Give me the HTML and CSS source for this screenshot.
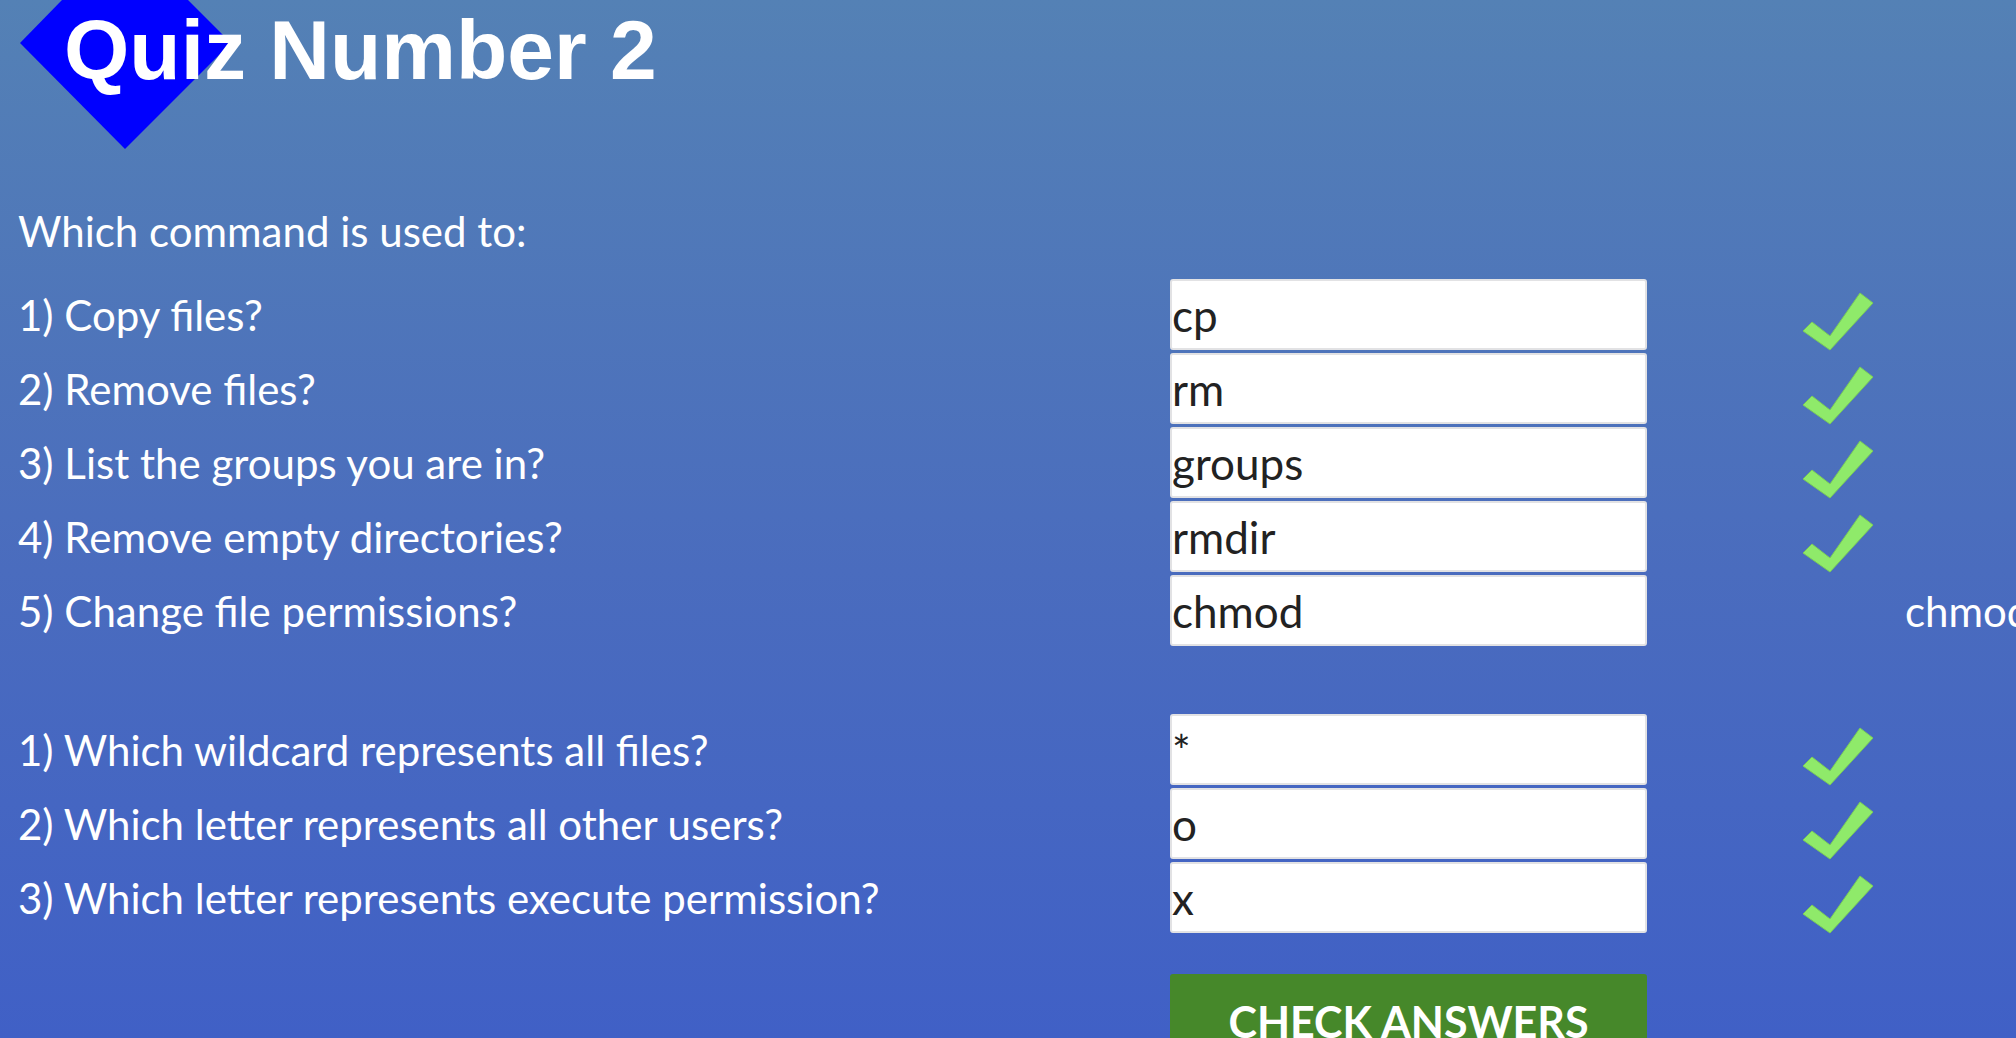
FILE: index.html
```html
<!DOCTYPE html>
<html lang="en">
<head>
<meta charset="utf-8">
<title>Quiz Number 2</title>
<link rel="stylesheet" href="styles.css">
</head>
<body>
<header class="brand">
  <svg class="gem" width="240" height="150" viewBox="0 0 240 150" aria-hidden="true"><polygon points="20,43 62,0 188,0 231,43 125,149" fill="#0000ff"/></svg>
  <h1 class="title">Quiz Number 2</h1>
</header>
<main class="quiz">
  <p class="intro">Which command is used to:</p>
  <div class="grid">
    <label class="q">1) Copy files?</label>
    <input class="answer" type="text" value="cp">
    <div class="mark"><svg class="tick" viewBox="0 0 80 62" width="80" height="62"><polygon points="3,42 12,33 30,47 60,4 73,14 30,61"/></svg></div>
    <div class="fix"></div>

    <label class="q">2) Remove files?</label>
    <input class="answer" type="text" value="rm">
    <div class="mark"><svg class="tick" viewBox="0 0 80 62" width="80" height="62"><polygon points="3,42 12,33 30,47 60,4 73,14 30,61"/></svg></div>
    <div class="fix"></div>

    <label class="q">3) List the groups you are in?</label>
    <input class="answer" type="text" value="groups">
    <div class="mark"><svg class="tick" viewBox="0 0 80 62" width="80" height="62"><polygon points="3,42 12,33 30,47 60,4 73,14 30,61"/></svg></div>
    <div class="fix"></div>

    <label class="q">4) Remove empty directories?</label>
    <input class="answer" type="text" value="rmdir">
    <div class="mark"><svg class="tick" viewBox="0 0 80 62" width="80" height="62"><polygon points="3,42 12,33 30,47 60,4 73,14 30,61"/></svg></div>
    <div class="fix"></div>

    <label class="q">5) Change file permissions?</label>
    <input class="answer" type="text" value="chmod">
    <div class="mark"></div>
    <div class="fix">chmod</div>

    <div class="spacer"></div>

    <label class="q">1) Which wildcard represents all files?</label>
    <input class="answer" type="text" value="*">
    <div class="mark"><svg class="tick" viewBox="0 0 80 62" width="80" height="62"><polygon points="3,42 12,33 30,47 60,4 73,14 30,61"/></svg></div>
    <div class="fix"></div>

    <label class="q">2) Which letter represents all other users?</label>
    <input class="answer" type="text" value="o">
    <div class="mark"><svg class="tick" viewBox="0 0 80 62" width="80" height="62"><polygon points="3,42 12,33 30,47 60,4 73,14 30,61"/></svg></div>
    <div class="fix"></div>

    <label class="q">3) Which letter represents execute permission?</label>
    <input class="answer" type="text" value="x">
    <div class="mark"><svg class="tick" viewBox="0 0 80 62" width="80" height="62"><polygon points="3,42 12,33 30,47 60,4 73,14 30,61"/></svg></div>
    <div class="fix"></div>

    <div class="actions">
      <button class="check" type="button">CHECK ANSWERS</button>
    </div>
  </div>
</main>
</body>
</html>
```
FILE: styles.css
```css
html, body {
  margin: 0;
  padding: 0;
  height: 100%;
  overflow: hidden;
}
body {
  background: linear-gradient(180deg, #5481b5 0%, #4a6cbe 55%, #4060c6 100%);
  font-family: Lato, "Open Sans", sans-serif;
  color: #ffffff;
}
.brand {
  position: relative;
  height: 96px;
}
.gem {
  position: absolute;
  left: 0;
  top: 0;
  z-index: 0;
}
.title {
  position: relative;
  z-index: 1;
  margin: 0;
  padding: 2px 0 0 64px;
  font-family: "Liberation Sans", Arial, sans-serif;
  font-weight: 700;
  font-size: 84px;
  line-height: normal;
  color: #ffffff;
  white-space: nowrap;
}
.quiz {
  padding: 0 0 0 18px;
}
.intro {
  margin: 110px 0 23px 0;
  font-size: 42px;
  line-height: normal;
}
.grid {
  display: grid;
  grid-template-columns: 1152px 477px 258px 400px;
  grid-template-rows: repeat(5, 71px) 62px repeat(3, 71px) auto;
  row-gap: 3px;
  align-items: center;
}
.q {
  font-size: 42px;
  line-height: normal;
  white-space: nowrap;
}
.answer {
  box-sizing: border-box;
  width: 477px;
  height: 71px;
  margin: 0;
  padding: 0;
  border: 2px solid #e2e2e4;
  border-radius: 3px;
  background: #ffffff;
  font-family: Lato, sans-serif;
  font-size: 44px;
  color: #222222;
  outline: none;
}
.mark {
  align-self: end;
  height: 71px;
  display: flex;
  align-items: flex-end;
}
.tick {
  margin-left: 153px;
  margin-bottom: -1px;
}
.tick polygon {
  fill: #8fea6a;
  stroke: #7acc58;
  stroke-width: 1;
  stroke-linejoin: round;
}
.fix {
  font-size: 42px;
  line-height: normal;
  white-space: nowrap;
}
.spacer {
  grid-column: 1 / -1;
}
.actions {
  grid-column: 2;
  align-self: start;
  padding-top: 38px;
}
.check {
  box-sizing: border-box;
  width: 477px;
  height: 92px;
  margin: 0;
  padding: 2px 0 0 0;
  border: none;
  border-radius: 3px;
  background: #46882a;
  color: #ffffff;
  font-family: Lato, sans-serif;
  font-weight: 700;
  font-size: 43px;
  line-height: normal;
  text-align: center;
  display: block;
}
```
